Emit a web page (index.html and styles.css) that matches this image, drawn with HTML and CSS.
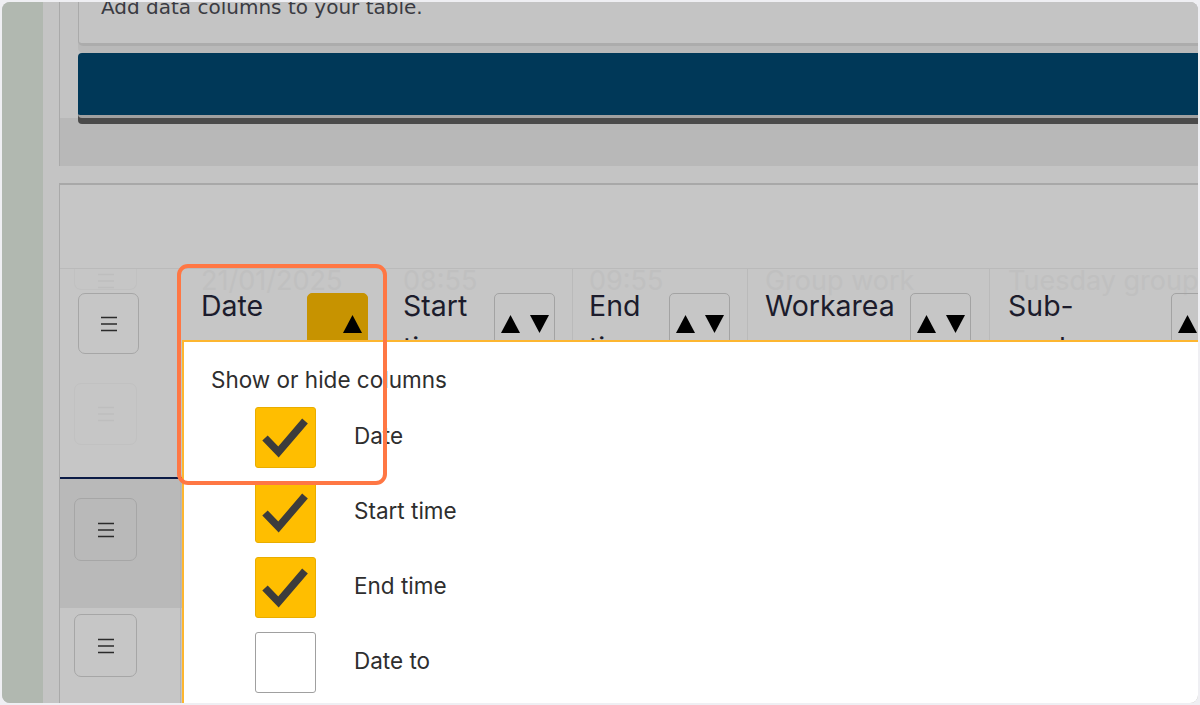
FILE: index.html
```html
<!DOCTYPE html>
<html lang="en">
<head>
<meta charset="utf-8">
<title>Show or hide columns</title>
<link rel="stylesheet" href="styles.css">
</head>
<body>
<div class="shot">
  <aside class="rail"></aside>
  <div class="gutter"></div>
  <main class="main">
    <section class="top-panel">
      <div class="intro-card"><p class="intro-text">Add data columns to your table.</p></div>
      <div class="action-bar"></div>
      <div class="panel-foot"></div>
    </section>
    <div class="panel-gap"></div>
    <section class="table-panel">
      <div class="toolbar-space"></div>
      <div class="table">
        <div class="thead">
          <div class="th th-menu">
            <div class="ghost-btn ghost-btn-top">
              <svg class="ham" width="16" height="16" viewBox="0 0 16 16"><path d="M0 1.5H16M0 8H16M0 14.5H16" stroke="currentColor" stroke-width="1.6"/></svg>
            </div>
            <button class="menu-btn menu-btn-head">
              <svg class="ham" width="16" height="16" viewBox="0 0 16 16"><path d="M0 1.5H16M0 8H16M0 14.5H16" stroke="currentColor" stroke-width="1.6"/></svg>
            </button>
            <div class="ghost-btn ghost-btn-low">
              <svg class="ham" width="16" height="16" viewBox="0 0 16 16"><path d="M0 1.5H16M0 8H16M0 14.5H16" stroke="currentColor" stroke-width="1.6"/></svg>
            </div>
          </div>
          <div class="th th-date">
            <div class="ghost">21/01/2025</div>
            <div class="th-main">
              <span class="th-label">Date</span>
              <button class="sort-btn sort-active">
                <svg width="48" height="18" viewBox="0 0 48 18"><polygon points="29,18 38.5,0 48,18" fill="#000"/></svg>
              </button>
            </div>
          </div>
          <div class="th th-start">
            <div class="ghost">08:55</div>
            <div class="th-main">
              <span class="th-label">Start time</span>
              <button class="sort-btn">
                <svg width="48" height="18" viewBox="0 0 48 18"><polygon points="0,18 9.5,0 19,18" fill="#000"/><polygon points="29,0 48,0 38.5,18" fill="#000"/></svg>
              </button>
            </div>
          </div>
          <div class="th th-end">
            <div class="ghost">09:55</div>
            <div class="th-main">
              <span class="th-label">End time</span>
              <button class="sort-btn">
                <svg width="48" height="18" viewBox="0 0 48 18"><polygon points="0,18 9.5,0 19,18" fill="#000"/><polygon points="29,0 48,0 38.5,18" fill="#000"/></svg>
              </button>
            </div>
          </div>
          <div class="th th-area">
            <div class="ghost">Group work</div>
            <div class="th-main">
              <span class="th-label">Workarea</span>
              <button class="sort-btn">
                <svg width="48" height="18" viewBox="0 0 48 18"><polygon points="0,18 9.5,0 19,18" fill="#000"/><polygon points="29,0 48,0 38.5,18" fill="#000"/></svg>
              </button>
            </div>
          </div>
          <div class="th th-sub">
            <div class="ghost">Tuesday group</div>
            <div class="th-main">
              <span class="th-label">Sub-workarea</span>
              <button class="sort-btn">
                <svg width="48" height="18" viewBox="0 0 48 18"><polygon points="0,18 9.5,0 19,18" fill="#000"/><polygon points="29,0 48,0 38.5,18" fill="#000"/></svg>
              </button>
            </div>
          </div>
        </div>
        <div class="row row-shaded">
          <div class="td td-menu">
            <button class="menu-btn">
              <svg class="ham" width="16" height="16" viewBox="0 0 16 16"><path d="M0 1.5H16M0 8H16M0 14.5H16" stroke="currentColor" stroke-width="1.6"/></svg>
            </button>
          </div>
        </div>
        <div class="row row-plain">
          <div class="td td-menu">
            <button class="menu-btn">
              <svg class="ham" width="16" height="16" viewBox="0 0 16 16"><path d="M0 1.5H16M0 8H16M0 14.5H16" stroke="currentColor" stroke-width="1.6"/></svg>
            </button>
          </div>
        </div>
      </div>
    </section>
  </main>

  <div class="popup">
    <p class="popup-title">Show or hide columns</p>
    <ul class="col-list">
      <li class="col-item">
        <span class="check checked"><svg width="61" height="61" viewBox="0 0 61 61"><polyline points="10,31 23.5,45 50,14" fill="none" stroke="#3c3c3c" stroke-width="7.5"/></svg></span>
        <span class="col-name">Date</span>
      </li>
      <li class="col-item">
        <span class="check checked"><svg width="61" height="61" viewBox="0 0 61 61"><polyline points="10,31 23.5,45 50,14" fill="none" stroke="#3c3c3c" stroke-width="7.5"/></svg></span>
        <span class="col-name">Start time</span>
      </li>
      <li class="col-item">
        <span class="check checked"><svg width="61" height="61" viewBox="0 0 61 61"><polyline points="10,31 23.5,45 50,14" fill="none" stroke="#3c3c3c" stroke-width="7.5"/></svg></span>
        <span class="col-name">End time</span>
      </li>
      <li class="col-item">
        <span class="check"></span>
        <span class="col-name">Date to</span>
      </li>
    </ul>
  </div>

  <div class="highlight"></div>
</div>
</body>
</html>
```

FILE: styles.css
```css
* { box-sizing: border-box; }
html, body { margin: 0; padding: 0; }
body {
  background: #efeff3;
  width: 1200px;
  height: 705px;
  overflow: hidden;
  font-family: Inter, "Noto Sans", sans-serif;
}
.shot {
  position: relative;
  margin: 2px;
  width: 1196px;
  height: 701px;
  border-radius: 8px;
  overflow: hidden;
  display: flex;
  background: #c4c4c4;
}
.rail { width: 41px; flex: none; background: #b1b8b0; }
.gutter { width: 16px; flex: none; background: #c4c4c4; }
.main { flex: 1; min-width: 0; display: flex; flex-direction: column; }

/* upper panel */
.top-panel {
  height: 164px;
  flex: none;
  border-left: 1px solid #a9a9a9;
  background: #c3c3c3;
  padding-left: 18px;
  display: flex;
  flex-direction: column;
}
.intro-card {
  margin-top: -14px;
  margin-right: -20px;
  height: 58px;
  background: #c4c4c4;
  border: 1px solid #aaaaaa;
  border-bottom: 3px solid #acacac;
  border-radius: 0 0 0 5px;
  padding: 6px 0 0 22px;
  box-shadow: 0 7px 0 #b9b9b9;
}
.intro-text {
  margin: 0;
  font-family: "DejaVu Sans", sans-serif;
  font-size: 20px;
  line-height: 24px;
  color: #3a3b42;
  white-space: nowrap;
}
.action-bar {
  position: relative;
  z-index: 1;
  margin-top: 7px;
  margin-right: -20px;
  height: 65px;
  flex: none;
  background: #003858;
  border-bottom: 3px solid #a0a0a0;
  border-radius: 4px;
  box-shadow: 0 6px 0 #4a4a4a;
}
.panel-foot {
  flex: 1;
  margin-left: -18px;
  background: #b8b8b8;
}
.panel-gap { height: 17px; flex: none; }

/* table panel */
.table-panel {
  flex: 1;
  border-top: 2px solid #a8a8a8;
  border-left: 1px solid #a9a9a9;
  background: #c6c6c6;
  overflow: hidden;
}
.toolbar-space { height: 83px; }
.table { display: flex; flex-direction: column; width: max-content; }
.thead {
  display: flex;
  height: 211px;
  border-top: 1px solid #bababa;
  border-bottom: 2px solid #0b1a45;
}
.th { flex: none; padding: 0 17px; }
.th + .th:not(.th-date) { border-left: 1px solid #bababa; }
.th-menu { width: 121px; padding: 0 0 0 18px; }
.th-date { width: 204px; padding-left: 20px; }
.th-start { width: 187px; }
.th-end { width: 175px; padding-left: 16px; }
.th-area { width: 242px; padding-right: 18px; }
.th-sub { width: 260px; padding-left: 18px; }

.ghost {
  height: 18px;
  font-size: 27px;
  line-height: 24px;
  color: #c0c0c0;
  white-space: nowrap;
}
.th-main {
  margin-top: -2px;
  display: flex;
  justify-content: space-between;
  align-items: flex-start;
  gap: 8px;
}
.th-label {
  min-width: 0;
  font-size: 28.5px;
  line-height: 42px;
  color: #1c1c2c;
}
.sort-btn {
  flex: none;
  margin-top: 8px;
  width: 61px;
  height: 61px;
  padding: 0;
  border: 1px solid #a3a3a3;
  border-radius: 5px;
  background: transparent;
  display: flex;
  align-items: center;
  justify-content: center;
}
.sort-active { background: #c79300; border-color: #c79300; }

.menu-btn {
  display: flex;
  align-items: center;
  justify-content: center;
  width: 61px;
  height: 61px;
  padding: 0;
  border: 1.5px solid #a6a6a6;
  border-radius: 7px;
  background: transparent;
  color: #2b2b2b;
}
.menu-btn-head { margin-top: 3px; }
.ghost-btn {
  width: 63px;
  margin-left: -4px;
  display: flex;
  align-items: center;
  justify-content: center;
  color: #bebebe;
  border: 1px solid #c1c1c1;
  border-radius: 7px;
}
.ghost-btn-top { height: 21px; border-top: none; border-radius: 0 0 7px 7px; padding-top: 3px; }
.ghost-btn-low { height: 62px; margin-top: 29px; }

.row { display: flex; }
.td-menu {
  width: 121px;
  padding-left: 14px;
  border-right: 1px solid #b3b3b3;
}
.td-menu .menu-btn { width: 63px; height: 63px; }
.row-shaded { background: #b9b9b9; }
.row-shaded .td-menu { height: 129px; padding-top: 19px; }
.row-plain .td-menu { height: 100px; padding-top: 6px; }

/* popup */
.popup {
  position: absolute;
  left: 180px;
  top: 338px;
  right: 0;
  bottom: 0;
  background: #ffffff;
  border-top: 2px solid #fdb630;
  border-left: 2px solid #fdb630;
  padding: 25px 0 0 27px;
}
.popup-title {
  margin: 0;
  font-size: 22.5px;
  line-height: 26px;
  color: #2e2e2e;
}
.col-list {
  list-style: none;
  margin: 14px 0 0;
  padding: 0 0 0 44px;
  display: flex;
  flex-direction: column;
  gap: 14px;
}
.col-item { display: flex; align-items: center; gap: 38px; }
.check {
  flex: none;
  width: 61px;
  height: 61px;
  border-radius: 3px;
  background: #fff;
  border: 1.5px solid #a0a0a0;
  display: block;
}
.check.checked { background: #ffbe00; border: 1px solid #e9ad00; }
.check svg { display: block; margin: -1px; }
.col-name { font-size: 22.5px; line-height: 24px; color: #2e2e2e; margin-top: -3px; }

.highlight {
  position: absolute;
  left: 175px;
  top: 262px;
  width: 210px;
  height: 221px;
  border: 4px solid #ff7744;
  border-radius: 11px;
}
```
